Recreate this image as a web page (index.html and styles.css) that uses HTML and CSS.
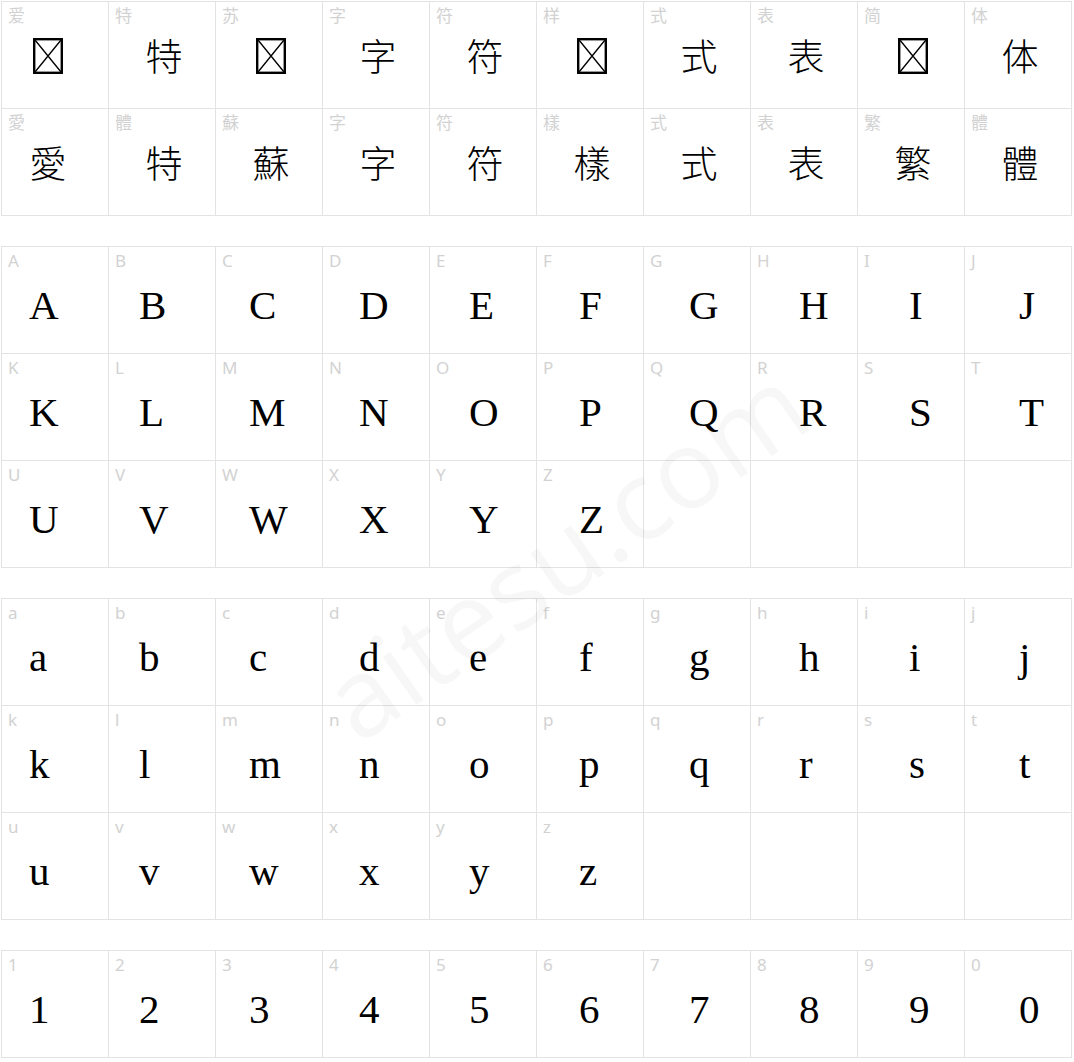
FILE: index.html
```html
<!DOCTYPE html>
<html lang="zh">
<head>
<meta charset="utf-8">
<title>Font preview</title>
<link rel="stylesheet" href="styles.css">
</head>
<body>
<div class="sheet">
  <section class="grid han">
    <div class="cell"><span class="lbl">爱</span><span class="g miss"><svg viewBox="0 0 30 36" width="30" height="36"><rect x="1.2" y="1.2" width="27.6" height="33.6" fill="none" stroke="#000" stroke-width="2.4"/><path d="M2 2 L28 34 M28 2 L2 34" stroke="#000" stroke-width="1.3" fill="none"/></svg></span></div>
    <div class="cell"><span class="lbl">特</span><span class="g cjk">特</span></div>
    <div class="cell"><span class="lbl">苏</span><span class="g miss"><svg viewBox="0 0 30 36" width="30" height="36"><rect x="1.2" y="1.2" width="27.6" height="33.6" fill="none" stroke="#000" stroke-width="2.4"/><path d="M2 2 L28 34 M28 2 L2 34" stroke="#000" stroke-width="1.3" fill="none"/></svg></span></div>
    <div class="cell"><span class="lbl">字</span><span class="g cjk">字</span></div>
    <div class="cell"><span class="lbl">符</span><span class="g cjk">符</span></div>
    <div class="cell"><span class="lbl">样</span><span class="g miss"><svg viewBox="0 0 30 36" width="30" height="36"><rect x="1.2" y="1.2" width="27.6" height="33.6" fill="none" stroke="#000" stroke-width="2.4"/><path d="M2 2 L28 34 M28 2 L2 34" stroke="#000" stroke-width="1.3" fill="none"/></svg></span></div>
    <div class="cell"><span class="lbl">式</span><span class="g cjk">式</span></div>
    <div class="cell"><span class="lbl">表</span><span class="g cjk">表</span></div>
    <div class="cell"><span class="lbl">简</span><span class="g miss"><svg viewBox="0 0 30 36" width="30" height="36"><rect x="1.2" y="1.2" width="27.6" height="33.6" fill="none" stroke="#000" stroke-width="2.4"/><path d="M2 2 L28 34 M28 2 L2 34" stroke="#000" stroke-width="1.3" fill="none"/></svg></span></div>
    <div class="cell"><span class="lbl">体</span><span class="g cjk">体</span></div>

    <div class="cell"><span class="lbl">愛</span><span class="g cjk">愛</span></div>
    <div class="cell"><span class="lbl">體</span><span class="g cjk">特</span></div>
    <div class="cell"><span class="lbl">蘇</span><span class="g cjk">蘇</span></div>
    <div class="cell"><span class="lbl">字</span><span class="g cjk">字</span></div>
    <div class="cell"><span class="lbl">符</span><span class="g cjk">符</span></div>
    <div class="cell"><span class="lbl">樣</span><span class="g cjk">樣</span></div>
    <div class="cell"><span class="lbl">式</span><span class="g cjk">式</span></div>
    <div class="cell"><span class="lbl">表</span><span class="g cjk">表</span></div>
    <div class="cell"><span class="lbl">繁</span><span class="g cjk">繁</span></div>
    <div class="cell"><span class="lbl">體</span><span class="g cjk">體</span></div>
  </section>

  <section class="grid">
    <div class="cell"><span class="lbl">A</span><span class="g lat">A</span></div>
    <div class="cell"><span class="lbl">B</span><span class="g lat">B</span></div>
    <div class="cell"><span class="lbl">C</span><span class="g lat">C</span></div>
    <div class="cell"><span class="lbl">D</span><span class="g lat">D</span></div>
    <div class="cell"><span class="lbl">E</span><span class="g lat">E</span></div>
    <div class="cell"><span class="lbl">F</span><span class="g lat">F</span></div>
    <div class="cell"><span class="lbl">G</span><span class="g lat">G</span></div>
    <div class="cell"><span class="lbl">H</span><span class="g lat">H</span></div>
    <div class="cell"><span class="lbl">I</span><span class="g lat">I</span></div>
    <div class="cell"><span class="lbl">J</span><span class="g lat">J</span></div>

    <div class="cell"><span class="lbl">K</span><span class="g lat">K</span></div>
    <div class="cell"><span class="lbl">L</span><span class="g lat">L</span></div>
    <div class="cell"><span class="lbl">M</span><span class="g lat">M</span></div>
    <div class="cell"><span class="lbl">N</span><span class="g lat">N</span></div>
    <div class="cell"><span class="lbl">O</span><span class="g lat">O</span></div>
    <div class="cell"><span class="lbl">P</span><span class="g lat">P</span></div>
    <div class="cell"><span class="lbl">Q</span><span class="g lat">Q</span></div>
    <div class="cell"><span class="lbl">R</span><span class="g lat">R</span></div>
    <div class="cell"><span class="lbl">S</span><span class="g lat">S</span></div>
    <div class="cell"><span class="lbl">T</span><span class="g lat">T</span></div>

    <div class="cell"><span class="lbl">U</span><span class="g lat">U</span></div>
    <div class="cell"><span class="lbl">V</span><span class="g lat">V</span></div>
    <div class="cell"><span class="lbl">W</span><span class="g lat">W</span></div>
    <div class="cell"><span class="lbl">X</span><span class="g lat">X</span></div>
    <div class="cell"><span class="lbl">Y</span><span class="g lat">Y</span></div>
    <div class="cell"><span class="lbl">Z</span><span class="g lat">Z</span></div>
    <div class="cell"></div>
    <div class="cell"></div>
    <div class="cell"></div>
    <div class="cell"></div>
  </section>

  <section class="grid">
    <div class="cell"><span class="lbl">a</span><span class="g lat">a</span></div>
    <div class="cell"><span class="lbl">b</span><span class="g lat">b</span></div>
    <div class="cell"><span class="lbl">c</span><span class="g lat">c</span></div>
    <div class="cell"><span class="lbl">d</span><span class="g lat">d</span></div>
    <div class="cell"><span class="lbl">e</span><span class="g lat">e</span></div>
    <div class="cell"><span class="lbl">f</span><span class="g lat">f</span></div>
    <div class="cell"><span class="lbl">g</span><span class="g lat">g</span></div>
    <div class="cell"><span class="lbl">h</span><span class="g lat">h</span></div>
    <div class="cell"><span class="lbl">i</span><span class="g lat">i</span></div>
    <div class="cell"><span class="lbl">j</span><span class="g lat">j</span></div>

    <div class="cell"><span class="lbl">k</span><span class="g lat">k</span></div>
    <div class="cell"><span class="lbl">l</span><span class="g lat">l</span></div>
    <div class="cell"><span class="lbl">m</span><span class="g lat">m</span></div>
    <div class="cell"><span class="lbl">n</span><span class="g lat">n</span></div>
    <div class="cell"><span class="lbl">o</span><span class="g lat">o</span></div>
    <div class="cell"><span class="lbl">p</span><span class="g lat">p</span></div>
    <div class="cell"><span class="lbl">q</span><span class="g lat">q</span></div>
    <div class="cell"><span class="lbl">r</span><span class="g lat">r</span></div>
    <div class="cell"><span class="lbl">s</span><span class="g lat">s</span></div>
    <div class="cell"><span class="lbl">t</span><span class="g lat">t</span></div>

    <div class="cell"><span class="lbl">u</span><span class="g lat">u</span></div>
    <div class="cell"><span class="lbl">v</span><span class="g lat">v</span></div>
    <div class="cell"><span class="lbl">w</span><span class="g lat">w</span></div>
    <div class="cell"><span class="lbl">x</span><span class="g lat">x</span></div>
    <div class="cell"><span class="lbl">y</span><span class="g lat">y</span></div>
    <div class="cell"><span class="lbl">z</span><span class="g lat">z</span></div>
    <div class="cell"></div>
    <div class="cell"></div>
    <div class="cell"></div>
    <div class="cell"></div>
  </section>

  <section class="grid">
    <div class="cell"><span class="lbl">1</span><span class="g lat">1</span></div>
    <div class="cell"><span class="lbl">2</span><span class="g lat">2</span></div>
    <div class="cell"><span class="lbl">3</span><span class="g lat">3</span></div>
    <div class="cell"><span class="lbl">4</span><span class="g lat">4</span></div>
    <div class="cell"><span class="lbl">5</span><span class="g lat">5</span></div>
    <div class="cell"><span class="lbl">6</span><span class="g lat">6</span></div>
    <div class="cell"><span class="lbl">7</span><span class="g lat">7</span></div>
    <div class="cell"><span class="lbl">8</span><span class="g lat">8</span></div>
    <div class="cell"><span class="lbl">9</span><span class="g lat">9</span></div>
    <div class="cell"><span class="lbl">0</span><span class="g lat">0</span></div>
  </section>

  <div class="wm" aria-hidden="true">aitesu.com</div>
</div>
</body>
</html>
```

FILE: styles.css
```css
html, body {
  margin: 0;
  padding: 0;
  background: #fff;
}

.sheet {
  position: relative;
  padding: 1px 0 0 1px;
  width: 1071px;
  overflow: hidden;
}

.grid {
  display: grid;
  grid-template-columns: repeat(10, 107px);
  width: max-content;
  border-top: 1px solid #e3e3e3;
  border-left: 1px solid #e3e3e3;
  margin-bottom: 30px;
}

.grid:last-of-type {
  margin-bottom: 0;
}

.cell {
  box-sizing: border-box;
  height: 107px;
  border-right: 1px solid #e3e3e3;
  border-bottom: 1px solid #e3e3e3;
  --c: 0;
}

.cell:nth-child(10n+2) { --c: 1; }
.cell:nth-child(10n+3) { --c: 2; }
.cell:nth-child(10n+4) { --c: 3; }
.cell:nth-child(10n+5) { --c: 4; }
.cell:nth-child(10n+6) { --c: 5; }
.cell:nth-child(10n+7) { --c: 6; }
.cell:nth-child(10n+8) { --c: 7; }
.cell:nth-child(10n+9) { --c: 8; }
.cell:nth-child(10n+10) { --c: 9; }

.lbl {
  display: block;
  height: 20px;
  padding: 4px 0 0 6px;
  font-family: "Noto Sans", "Noto Sans CJK SC", sans-serif;
  font-size: 17px;
  line-height: 20px;
  color: #d2d2d2;
}

.g {
  display: block;
  color: #000;
}

.lat {
  margin-top: 14px;
  margin-left: calc(27px + var(--c) * 3px);
  font-family: "Liberation Serif", serif;
  font-size: 41px;
  line-height: 41px;
}

.cjk {
  margin-top: 11px;
  padding-left: 4px;
  text-align: center;
  font-family: "Noto Sans CJK JP", sans-serif;
  font-weight: 300;
  font-size: 37px;
  line-height: 37px;
}

.miss {
  margin-top: 12px;
  padding-left: 4px;
  text-align: center;
}

.miss svg {
  display: block;
  margin: 0 auto;
}

.han .cell:nth-child(10n+1) .g {
  padding-left: 0;
  padding-right: 14px;
}

.wm {
  position: absolute;
  left: 563px;
  top: 550px;
  transform: translate(-50%, -50%) rotate(-35deg);
  font-family: "Open Sans", sans-serif;
  font-size: 110px;
  line-height: 1;
  white-space: nowrap;
  color: rgba(0, 0, 0, 0.03);
  pointer-events: none;
}
```
